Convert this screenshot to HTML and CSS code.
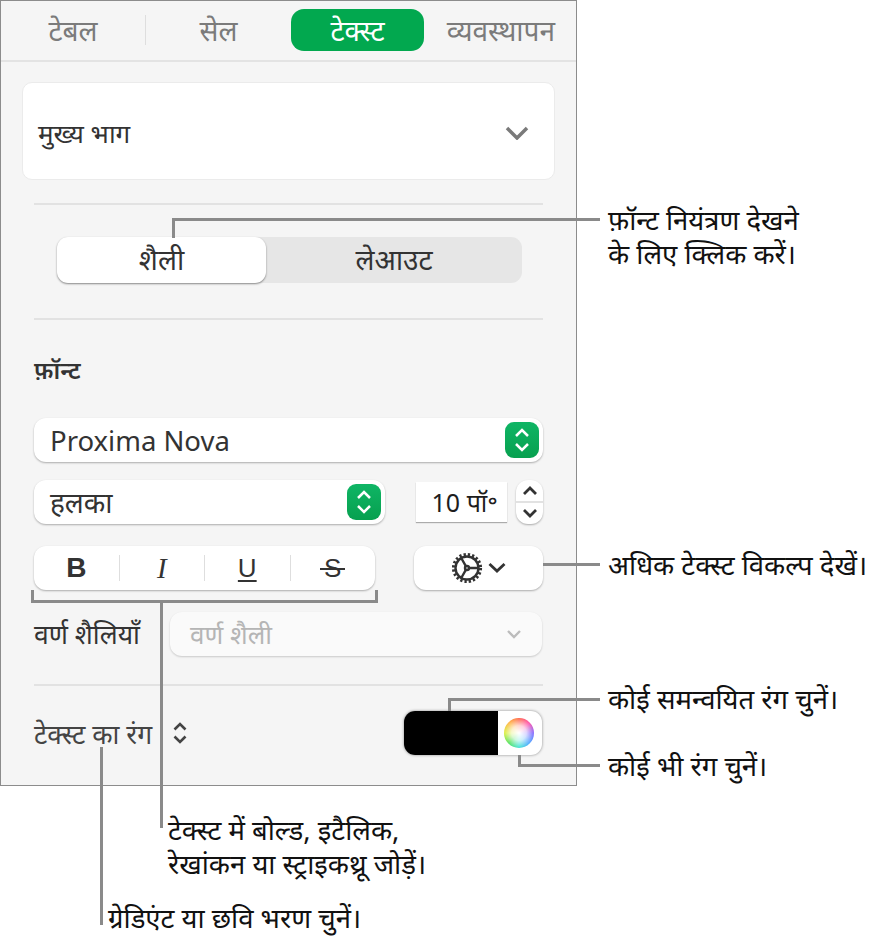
FILE: index.html
```html
<!DOCTYPE html>
<html lang="hi">
<head>
    <meta charset="UTF-8">
    <title>टेक्स्ट</title>
    <link rel="stylesheet" href="styles.css">
</head>
<body>
<div class="figure">
    <div class="panel">
        <div class="tabs">
            <span class="tab tab-1">टेबल</span>
            <span class="tab-sep"></span>
            <span class="tab tab-2">सेल</span>
            <span class="tab tab-active">टेक्स्ट</span>
            <span class="tab tab-4">व्यवस्थापन</span>
        </div>

        <div class="style-card">
            <span>मुख्य भाग</span>
            <svg class="card-chevron" width="24" height="14" viewBox="0 0 24 14"><path d="M2 2l10 10L22 2"/></svg>
        </div>
        <div class="divider divider-top"></div>

        <div class="segmented">
            <div class="seg seg-on">शैली</div>
            <div class="seg">लेआउट</div>
        </div>
        <div class="divider divider-seg"></div>

        <div class="section-title">फ़ॉन्ट</div>

        <div class="popup popup-font">
            <span class="latin">Proxima Nova</span>
            <span class="green-btn">
                <svg width="18" height="26" viewBox="0 0 18 26"><path d="M3 9l6-6 6 6M3 17l6 6 6-6"/></svg>
            </span>
        </div>

        <div class="row row-weight">
            <div class="popup popup-weight">
                <span>हलका</span>
                <span class="green-btn">
                    <svg width="18" height="26" viewBox="0 0 18 26"><path d="M3 9l6-6 6 6M3 17l6 6 6-6"/></svg>
                </span>
            </div>
            <div class="size-field">10 पॉ॰</div>
            <div class="stepper">
                <svg width="16" height="10" viewBox="0 0 16 10"><path d="M2 8l6-6 6 6"/></svg>
                <svg width="16" height="10" viewBox="0 0 16 10"><path d="M2 2l6 6 6-6"/></svg>
            </div>
        </div>

        <div class="row row-format">
            <div class="format-group">
                <span class="fmt fmt-b">B</span>
                <span class="fmt fmt-i">I</span>
                <span class="fmt fmt-u">U</span>
                <span class="fmt fmt-s"><span>S</span></span>
            </div>
            <div class="gear-btn">
                <svg width="54" height="32" viewBox="0 0 54 32">
                    <circle class="teeth" cx="15" cy="16" r="13.600"/>
                    <circle class="ring" cx="15" cy="16" r="11.500"/>
                    <circle class="hub" cx="15" cy="16" r="2"/>
                    <path class="spokes" d="M17 16H27M14 14.300L9.200 6M14 17.700L9.200 26"/>
                    <path class="gear-chev" d="M37.500 12l7.500 7 7.500-7"/>
                </svg>
            </div>
        </div>

        <div class="row row-char">
            <span class="char-label">वर्ण शैलियाँ</span>
            <div class="char-popup">
                <span>वर्ण शैली</span>
                <svg width="16" height="10" viewBox="0 0 16 10"><path d="M2 2l6 6 6-6"/></svg>
            </div>
        </div>
        <div class="divider divider-color"></div>

        <div class="row row-color">
            <span class="color-label">टेक्स्ट का रंग</span>
            <svg class="color-updown" width="16" height="24" viewBox="0 0 16 24"><path d="M2.500 8.500L8 3l5.500 5.500M2.500 15.500L8 21l5.500-5.500"/></svg>
            <div class="color-well">
                <span class="swatch"></span>
                <span class="wheel-cell"><span class="wheel"></span></span>
            </div>
        </div>
    </div>

    <svg class="leaders" width="886" height="948" viewBox="0 0 886 948">
        <path d="M173.500 238V219.500H600"/>
        <path d="M543 564.500H600"/>
        <path d="M32.500 590V601.500H376.500V590M161.500 602V828"/>
        <path d="M449.500 711V699.500H600"/>
        <path d="M519.500 755V765.500H600"/>
        <path d="M101.500 747V925"/>
    </svg>

    <p class="callout callout-font">फ़ॉन्ट नियंत्रण देखने<br>के लिए क्लिक करें।</p>
    <p class="callout callout-more">अधिक टेक्स्ट विकल्प देखें।</p>
    <p class="callout callout-coord">कोई समन्वयित रंग चुनें।</p>
    <p class="callout callout-any">कोई भी रंग चुनें।</p>
    <p class="callout callout-bold">टेक्स्ट में बोल्ड, इटैलिक,<br>रेखांकन या स्ट्राइकथ्रू जोड़ें।</p>
    <p class="callout callout-grad">ग्रेडिएंट या छवि भरण चुनें।</p>
</div>
</body>
</html>
```

FILE: styles.css
```css
/* Page */
body {
    margin: 0;
    background-color: #ffffff;
    color: #1d1d1d;
    font-family: "Noto Sans", "Noto Sans Devanagari", "Lohit Devanagari", "DejaVu Sans", sans-serif;
}

.figure {
    position: relative;
    width: 886px;
    height: 948px;
    overflow: hidden;
}

svg path, svg circle {
    fill: none;
}

/* Panel */
.panel {
    box-sizing: border-box;
    width: 577px;
    height: 786px;
    border: 1px solid #8c8c8c;
    background-color: #f5f5f5;
    display: flex;
    flex-direction: column;
}

.tabs {
    height: 59px;
    flex: none;
    border-bottom: 2px solid #e3e3e3;
    display: flex;
    align-items: flex-start;
    font-size: 28px;
    font-weight: 450;
    color: #7b7b7b;
}

.tab {
    display: flex;
    align-items: center;
    justify-content: center;
    height: 42px;
    margin-top: 8px;
}

.tab-1 { width: 144px; }
.tab-2 { width: 145px; }

.tab-4 {
    width: 132px;
    margin-left: -1px;
    justify-content: flex-end;
    white-space: nowrap;
}

.tab-sep {
    width: 1px;
    height: 30px;
    margin-top: 14px;
    background-color: #dedede;
}

.tab-active {
    width: 133px;
    border-radius: 13px;
    background-color: #02a84f;
    color: #ffffff;
}

.style-card {
    box-sizing: border-box;
    height: 98px;
    margin: 20px 21px 0;
    padding: 4px 25px 0 15px;
    flex: none;
    display: flex;
    align-items: center;
    justify-content: space-between;
    background-color: #ffffff;
    border: 1px solid #ebebeb;
    border-radius: 10px;
    font-size: 26px;
    font-weight: 450;
    color: #333333;
}

.card-chevron path {
    stroke: #7a7a7a;
    stroke-width: 3.500;
}

.divider {
    height: 2px;
    margin: 0 33px;
    flex: none;
    background-color: #e2e2e2;
}

.divider-top { margin-top: 23px; }
.divider-seg { margin-top: 35px; }
.divider-color { margin-top: 28px; }

.segmented {
    box-sizing: border-box;
    width: 465px;
    height: 46px;
    margin: 32px 0 0 56px;
    flex: none;
    display: flex;
    background-color: #e6e6e6;
    border-radius: 11px;
    font-size: 28px;
    font-weight: 450;
    line-height: 44px;
    color: #333333;
}

.seg {
    flex: 1;
    display: flex;
    align-items: flex-start;
    justify-content: center;
}

.seg-on {
    flex: none;
    width: 209px;
    background-color: #ffffff;
    border-radius: 11px;
    box-shadow: 0 1px 2px rgba(0, 0, 0, 0.45);
}

.section-title {
    height: 34px;
    margin: 33px 0 0 33px;
    flex: none;
    font-size: 24px;
    font-weight: 600;
    line-height: 34px;
    color: #333333;
}

/* Controls */
.popup {
    box-sizing: border-box;
    height: 44px;
    flex: none;
    display: flex;
    align-items: center;
    justify-content: space-between;
    padding: 0 4px 0 16px;
    background-color: #ffffff;
    border-radius: 12px;
    box-shadow: 0 1px 2px rgba(0, 0, 0, 0.3);
    font-size: 28px;
    color: #333333;
}

.popup-font {
    width: 509px;
    margin: 31px 0 0 33px;
}

.latin {
    font-family: "Noto Sans", sans-serif;
    font-size: 27.500px;
}

.green-btn {
    width: 34px;
    height: 36px;
    display: flex;
    align-items: center;
    justify-content: center;
    border-radius: 9px;
    background: linear-gradient(#0fb565, #07a04f);
}

.green-btn path {
    stroke: #ffffff;
    stroke-width: 2.500;
}

.row {
    display: flex;
    flex: none;
    align-items: center;
}

.row-weight {
    height: 44px;
    margin: 18px 0 0 33px;
}

.popup-weight {
    width: 351px;
}

.size-field {
    box-sizing: border-box;
    width: 91px;
    height: 40px;
    margin-left: 31px;
    padding-right: 9px;
    display: flex;
    align-items: center;
    justify-content: flex-end;
    background-color: #ffffff;
    box-shadow: 0 1px 1px rgba(0, 0, 0, 0.3);
    font-size: 25px;
    color: #1d1d1d;
}

.stepper {
    width: 27px;
    height: 44px;
    margin-left: 9px;
    display: flex;
    flex-direction: column;
    align-items: center;
    justify-content: space-around;
    background-color: #ffffff;
    border-radius: 12px;
    box-shadow: 0 1px 2px rgba(0, 0, 0, 0.3);
    background-image: linear-gradient(#e2e2e2, #e2e2e2);
    background-size: 100% 2px;
    background-position: 0 50%;
    background-repeat: no-repeat;
}

.stepper path {
    stroke: #333333;
    stroke-width: 2.800;
}

.row-format {
    height: 44px;
    margin: 22px 0 0 33px;
}

.format-group {
    width: 341px;
    height: 44px;
    display: flex;
    align-items: center;
    background-color: #ffffff;
    border-radius: 12px;
    box-shadow: 0 1px 2px rgba(0, 0, 0, 0.3);
    font-family: "Liberation Sans", sans-serif;
    font-size: 26px;
    color: #333333;
}

.fmt {
    flex: 1;
    height: 26px;
    line-height: 26px;
    text-align: center;
    border-left: 1px solid #dedede;
}

.fmt-b {
    border-left: none;
    font-weight: 700;
    font-size: 28px;
}

.fmt-i {
    font-family: "Liberation Serif", serif;
    font-size: 29px;
    font-style: italic;
}

.fmt-u {
    text-decoration: underline;
    text-decoration-thickness: 2px;
    text-underline-offset: 3px;
}

.fmt-s span {
    padding: 0 4px;
    background: linear-gradient(#333333, #333333) 0 55% / 100% 2px no-repeat;
}

.gear-btn {
    width: 129px;
    height: 44px;
    margin-left: 39px;
    display: flex;
    align-items: center;
    justify-content: center;
    background-color: #ffffff;
    border-radius: 12px;
    box-shadow: 0 1px 2px rgba(0, 0, 0, 0.3);
}

.gear-btn .teeth {
    stroke: #333333;
    stroke-width: 3;
    stroke-dasharray: 2.300 2;
}

.gear-btn .ring,
.gear-btn .hub,
.gear-btn .spokes,
.gear-btn .gear-chev {
    stroke: #333333;
    stroke-width: 2.400;
}

.gear-btn .gear-chev {
    stroke-width: 2.800;
}

.row-char {
    height: 44px;
    margin: 22px 0 0 33px;
}

.char-label {
    width: 136px;
    font-size: 26.500px;
    color: #333333;
    white-space: nowrap;
}

.char-popup {
    box-sizing: border-box;
    width: 372px;
    height: 44px;
    padding: 0 20px;
    display: flex;
    align-items: center;
    justify-content: space-between;
    background-color: #fafafa;
    border-radius: 12px;
    box-shadow: 0 1px 2px rgba(0, 0, 0, 0.18);
    font-size: 26px;
    color: #b5b5b5;
}

.char-popup path {
    stroke: #bcbcbc;
    stroke-width: 2.400;
}

.row-color {
    height: 44px;
    margin: 25px 0 0 33px;
}

.color-label {
    width: 136px;
    padding-top: 2px;
    font-size: 26.500px;
    color: #444444;
    white-space: nowrap;
}

.color-updown path {
    stroke: #444444;
    stroke-width: 2.600;
}

.color-updown {
    margin-left: 2px;
}

.color-well {
    width: 138px;
    height: 44px;
    margin-left: 216px;
    display: flex;
    border-radius: 11px;
    overflow: hidden;
    background-color: #ffffff;
    box-shadow: 0 0 3px rgba(0, 0, 0, 0.45);
}

.swatch {
    width: 94px;
    background-color: #000000;
}

.wheel-cell {
    flex: 1;
    display: flex;
    align-items: center;
    justify-content: center;
    padding-right: 2px;
}

.wheel {
    width: 30px;
    height: 30px;
    border-radius: 50%;
    background:
        radial-gradient(circle, #ffffff 0%, rgba(255, 255, 255, 0.75) 35%, rgba(255, 255, 255, 0) 75%),
        conic-gradient(#ff5a3c, #ff3fa0, #7a5cff, #3aa0ff, #33e0d0, #44e050, #d8ee30, #ffb030, #ff5a3c);
}

/* Callouts */
.leaders {
    position: absolute;
    left: 0;
    top: 0;
    pointer-events: none;
}

.leaders path {
    stroke: #8a8a8a;
    stroke-width: 3;
}

.callout {
    position: absolute;
    margin: 0;
    font-size: 27.500px;
    line-height: 34px;
    color: #111111;
    white-space: nowrap;
}

.callout-font { left: 608px; top: 203px; }
.callout-more { left: 608px; top: 548px; }
.callout-coord { left: 608px; top: 682px; }
.callout-any { left: 608px; top: 749px; }
.callout-bold { left: 168px; top: 813px; }
.callout-grad { left: 108px; top: 901px; }
```
